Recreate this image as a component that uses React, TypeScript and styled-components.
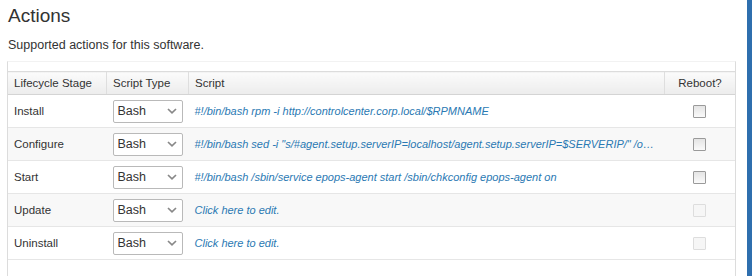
import React from 'react';
import styled, { createGlobalStyle } from 'styled-components';

const GlobalStyle = createGlobalStyle`
  html, body {
    margin: 0;
    padding: 0;
    background: #ffffff;
    font-family: "Liberation Sans", Arial, sans-serif;
    color: #333333;
    overflow: hidden;
  }
`;

const Page = styled.div`
  display: flex;
  width: 752px;
  height: 276px;
  overflow: hidden;
`;

const Main = styled.div`
  flex: 1;
  padding: 0 11px 0 7px;
`;

const SideEdge = styled.div`
  width: 5px;
  background: #2f6fae;
`;

const Title = styled.h2`
  margin: 4px 0 0 1px;
  font-size: 19px;
  font-weight: normal;
  line-height: 24px;
  color: #333;
`;

const Subtitle = styled.p`
  margin: 9px 0 0 1px;
  font-size: 12.5px;
  line-height: 16px;
  color: #333;
`;

const GridFrame = styled.div`
  margin-top: 8px;
  padding-top: 9px;
  height: 240px;
  border-left: 1px solid #dcdcdc;
  border-right: 1px solid #dcdcdc;
  border-top: 1px solid #f2f2f2;
`;

const Table = styled.table`
  width: 100%;
  border-collapse: collapse;
  table-layout: fixed;
  font-size: 11px;
`;

const HeadCell = styled.th<{ $width?: number; $center?: boolean }>`
  ${({ $width }) => ($width ? `width: ${$width}px;` : '')}
  height: 22px;
  padding: 0 6px;
  text-align: ${({ $center }) => ($center ? 'center' : 'left')};
  font-weight: normal;
  font-size: 11.5px;
  color: #333;
  background: linear-gradient(#fbfbfb, #ececec);
  border-top: 1px solid #dcdcdc;
  border-bottom: 1px solid #d4d4d4;
  border-left: 1px solid #dedede;
  &:first-child {
    border-left: none;
  }
`;

const Row = styled.tr<{ $alt?: boolean }>`
  height: 33px;
  background: ${({ $alt }) => ($alt ? '#f8f8f8' : '#ffffff')};
  border-bottom: 1px solid #e6e6e6;
`;

const Cell = styled.td<{ $center?: boolean }>`
  padding: 0 6px;
  vertical-align: middle;
  text-align: ${({ $center }) => ($center ? 'center' : 'left')};
  font-size: 11.5px;
  white-space: nowrap;
  overflow: hidden;
  text-overflow: ellipsis;
`;

const ScriptCell = styled(Cell)`
  font-size: 11px;
  font-style: italic;
  color: #2a79b3;
`;

const SelectBox = styled.div`
  display: flex;
  align-items: center;
  justify-content: space-between;
  width: 70px;
  height: 23px;
  box-sizing: border-box;
  padding: 0 5px 0 4px;
  border: 1px solid #b9b9b9;
  border-radius: 2px;
  background: #fff;
  font-size: 12.5px;
  color: #333;
`;

const Check = styled.span<{ $disabled?: boolean }>`
  display: inline-block;
  width: 11px;
  height: 11px;
  vertical-align: middle;
  border: 1px solid ${({ $disabled }) => ($disabled ? '#dddddd' : '#9a9a9a')};
  background: ${({ $disabled }) =>
    $disabled ? '#f6f6f6' : 'linear-gradient(#e4e4e4, #fafafa)'};
  border-radius: 1px;
`;

const Chevron = () => (
  <svg width="10" height="6" viewBox="0 0 10 6">
    <path d="M1 1l4 3.8L9 1" fill="none" stroke="#888" strokeWidth="1.7" />
  </svg>
);

const rows = [
  { stage: 'Install', script: '#!/bin/bash rpm -i http://controlcenter.corp.local/$RPMNAME', enabled: true },
  {
    stage: 'Configure',
    script:
      '#!/bin/bash sed -i "s/#agent.setup.serverIP=localhost/agent.setup.serverIP=$SERVERIP/" /opt/vmware/epops-agent/conf/agent.properties',
    enabled: true,
  },
  { stage: 'Start', script: '#!/bin/bash /sbin/service epops-agent start /sbin/chkconfig epops-agent on', enabled: true },
  { stage: 'Update', script: 'Click here to edit.', enabled: false },
  { stage: 'Uninstall', script: 'Click here to edit.', enabled: false },
];

const App: React.FC = () => {
  return (
    <Page>
      <GlobalStyle />
      <Main>
        <Title>Actions</Title>
        <Subtitle>Supported actions for this software.</Subtitle>
        <GridFrame>
          <Table>
            <thead>
              <tr>
                <HeadCell $width={86}>Lifecycle Stage</HeadCell>
                <HeadCell $width={69}>Script Type</HeadCell>
                <HeadCell>Script</HeadCell>
                <HeadCell $width={58} $center>Reboot?</HeadCell>
              </tr>
            </thead>
            <tbody>
              {rows.map((r, i) => (
                <Row key={r.stage} $alt={i % 2 === 1}>
                  <Cell>{r.stage}</Cell>
                  <Cell>
                    <SelectBox>
                      Bash
                      <Chevron />
                    </SelectBox>
                  </Cell>
                  <ScriptCell>{r.script}</ScriptCell>
                  <Cell $center>
                    <Check $disabled={!r.enabled} />
                  </Cell>
                </Row>
              ))}
            </tbody>
          </Table>
        </GridFrame>
      </Main>
      <SideEdge />
    </Page>
  );
};

export default App;
